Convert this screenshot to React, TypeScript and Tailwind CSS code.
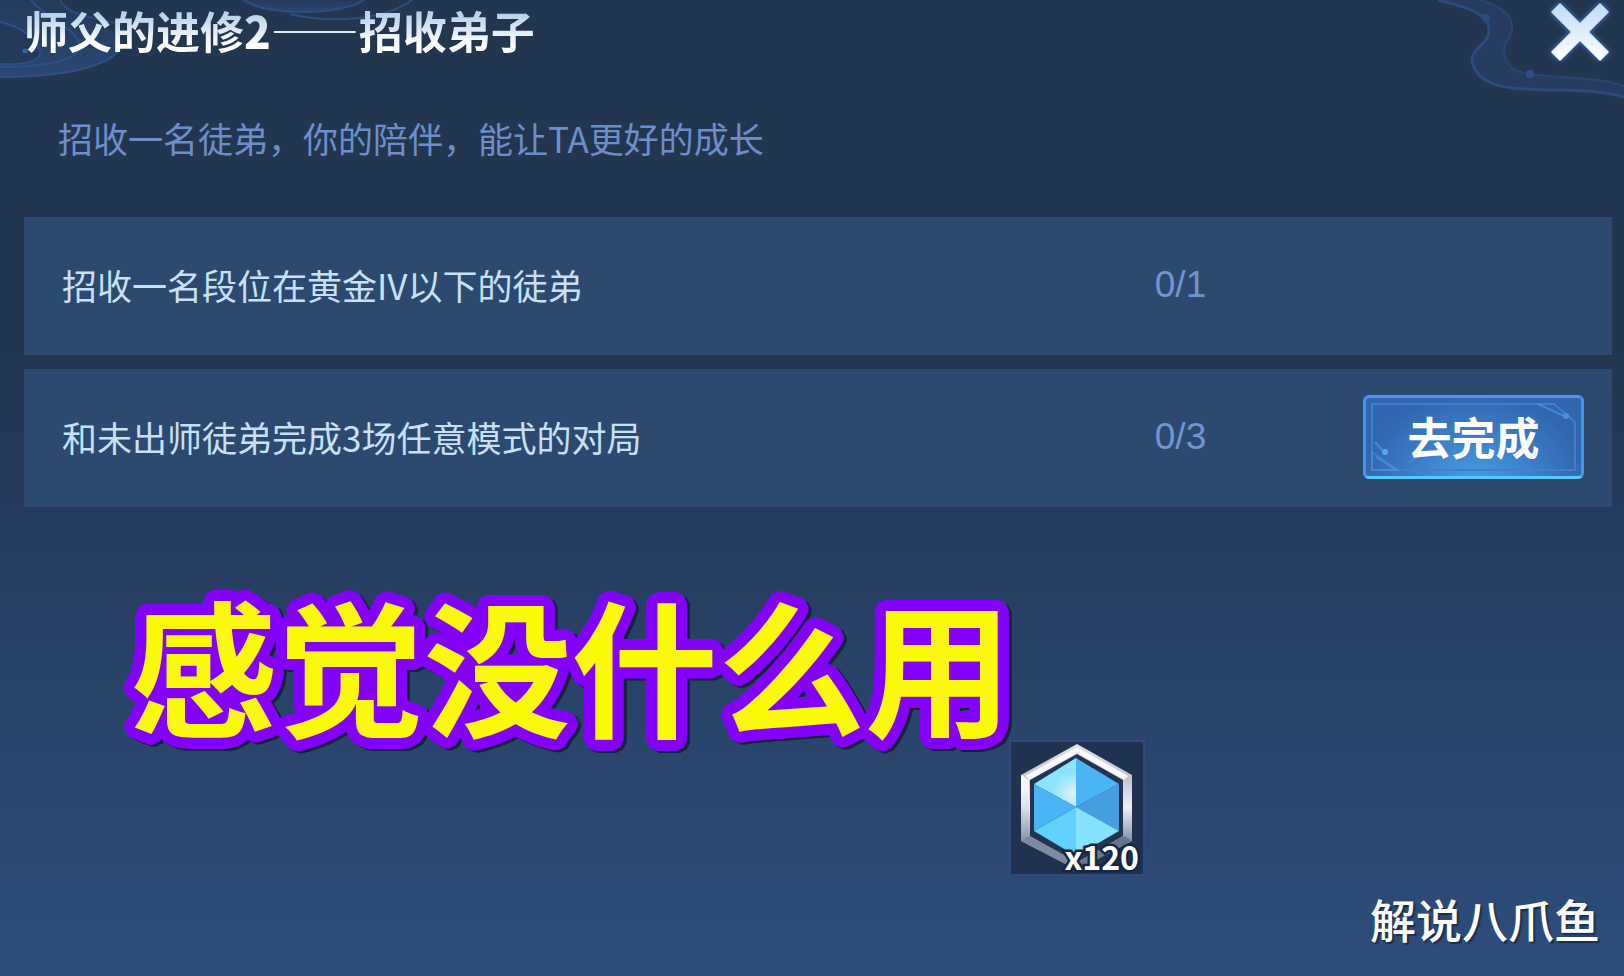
export default function App() {
  const tasks = [
    { label: "招收一名段位在黄金IV以下的徒弟", progress: "0/1", action: null },
    { label: "和未出师徒弟完成3场任意模式的对局", progress: "0/3", action: "去完成" },
  ];
  return (
    <main
      lang="zh-CN"
      className="relative flex min-h-screen flex-col overflow-hidden bg-[linear-gradient(180deg,#233650_0%,#233650_36%,#243a5c_52%,#29446b_74%,#2e4d7b_100%)] font-['Noto_Sans_CJK_SC',sans-serif]"
    >
      <CloudLeft />
      <CloudRight />

      <header className="relative flex h-[62px] items-start justify-between pr-3 pl-6">
        <h1 className="bg-linear-to-b from-[#b9d3ea] from-25% to-white to-75% bg-clip-text text-[44px] leading-[60px] font-bold whitespace-nowrap text-transparent">
          师父的进修<span className="font-black">2</span>
          <span lang="zh-TW" className="font-['Noto_Sans_CJK_TC',sans-serif] font-medium">——</span>招收弟子
        </h1>
        <button type="button" aria-label="关闭" className="cursor-pointer">
          <CloseIcon />
        </button>
      </header>

      <p className="relative mt-[50px] pl-[58px] text-[35px] leading-[52px] text-[#6c8fca]">
        招收一名徒弟，你的陪伴，能让TA更好的成长
      </p>

      <ul className="relative mt-[53px] flex flex-col gap-[14px] pr-3 pl-6">
        {tasks.map((t) => (
          <li
            key={t.label}
            className="flex h-[138px] items-center bg-[#2c4a6f] pr-7 pb-[3px] pl-[38px] text-[35px] leading-[52px]"
          >
            <span className="w-[71.8%] text-[#c6e0f5]">{t.label}</span>
            <span className="font-['Liberation_Sans',sans-serif] text-[37px] text-[#7095cf]">{t.progress}</span>
            {t.action && <TaskButton label={t.action} />}
          </li>
        ))}
      </ul>

      <p className="relative mt-[55px] pl-[130px] text-[147px] leading-[200px] font-bold whitespace-nowrap text-[#fafa05] [filter:drop-shadow(3px_2px_0px_#142338)] [text-shadow:11px_0_#8400ff,11px_2px_#8400ff,10px_4px_#8400ff,9px_6px_#8400ff,8px_8px_#8400ff,6px_9px_#8400ff,4px_10px_#8400ff,2px_11px_#8400ff,0_11px_#8400ff,-2px_11px_#8400ff,-4px_10px_#8400ff,-6px_9px_#8400ff,-8px_8px_#8400ff,-9px_6px_#8400ff,-10px_4px_#8400ff,-11px_2px_#8400ff,-11px_0_#8400ff,-11px_-2px_#8400ff,-10px_-4px_#8400ff,-9px_-6px_#8400ff,-8px_-8px_#8400ff,-6px_-9px_#8400ff,-4px_-10px_#8400ff,-2px_-11px_#8400ff,0_-11px_#8400ff,2px_-11px_#8400ff,4px_-10px_#8400ff,6px_-9px_#8400ff,8px_-8px_#8400ff,9px_-6px_#8400ff,10px_-4px_#8400ff,11px_-2px_#8400ff]">
        感觉没什么用
      </p>

      <div className="relative -mt-[22px] ml-[1009px] w-fit">
        <Reward amount="x120" />
      </div>

      <footer className="relative mt-2 flex justify-end pr-6 text-[46px] leading-[68px] font-medium text-white [text-shadow:2px_2px_1px_#1c2f4c]">
        解说八爪鱼
      </footer>
    </main>
  );
}

function TaskButton({ label }: { label: string }) {
  return (
    <button
      type="button"
      className="relative ml-auto h-[84px] w-[221px] cursor-pointer rounded-md border-[3px] border-x-[#4397e6] border-t-[#5a8ff0] border-b-[#55c8ff] bg-[radial-gradient(ellipse_at_50%_110%,#469fe4_0%,#3d83cb_35%,#3266ae_75%)] pb-0.5 text-[44px] leading-[60px] font-bold text-white"
    >
      <svg viewBox="0 0 215 78" className="absolute inset-0 size-full" fill="none" aria-hidden="true">
        <path d="M6 6H188L209 24V72H32L6 54Z" stroke="#3f7fd2" strokeWidth="2" />
        <path d="M6 54V72H32M9 44L18 54M172 6L200 19M10 59L32 73" stroke="#4f9ee8" strokeWidth="2" opacity=".6" />
        <circle cx="19" cy="54" r="3" fill="#55a7ef" />
        <circle cx="200" cy="18" r="3" fill="#4a92e2" />
      </svg>
      <span className="relative">{label}</span>
    </button>
  );
}

function Reward({ amount }: { amount: string }) {
  return (
    <div className="relative size-[136px] border-2 border-[#2c4c7c] bg-[#1f3351]">
      <svg viewBox="0 0 132 132" className="size-full" aria-hidden="true">
        <defs>
          <linearGradient id="rim" x1="0" y1="0" x2="0" y2="1">
            <stop offset="0" stopColor="#dfe2ea" />
            <stop offset=".28" stopColor="#c3c5d2" />
            <stop offset=".5" stopColor="#eef1f8" />
            <stop offset=".75" stopColor="#8b98ae" />
            <stop offset="1" stopColor="#5f7189" />
          </linearGradient>
          <linearGradient id="side" x1="0" y1="0" x2="0" y2="1">
            <stop offset="0" stopColor="#ffffff" />
            <stop offset=".45" stopColor="#e4e4ee" />
            <stop offset="1" stopColor="#8694a8" />
          </linearGradient>
          <radialGradient id="shine" gradientUnits="userSpaceOnUse" cx="63" cy="52" r="22">
            <stop offset="0" stopColor="#e4f0fa" />
            <stop offset="1" stopColor="#8be3ff" />
          </radialGradient>
        </defs>
        <path d="M66 2L121 33V99L66 128L10 99V33Z" fill="url(#rim)" />
        <path d="M66 5L117 34L113 38L66 11L19 38L14 34Z" fill="#f8f8fd" />
        <path d="M10 33L18 38V94L10 99Z" fill="url(#side)" />
        <path d="M10 99L18 94L66 120V128Z" fill="#7c8ba1" />
        <path d="M66 128V120L113 94L121 99Z" fill="#64768d" />
        <path d="M66 12L112 38V94L66 120L19 94V38Z" fill="#233452" />
        <path d="M65 65V16L23 42Z" fill="url(#shine)" />
        <path d="M65 65V16L108 42Z" fill="#49b5f6" />
        <path d="M65 65L108 42V89Z" fill="#459fe0" />
        <path d="M65 65L108 89L65 114Z" fill="#86e3ff" />
        <path d="M65 65V114L23 89Z" fill="#60d0fc" />
        <path d="M65 65L23 89V42Z" fill="#49b5f6" />
      </svg>
      <span className="absolute right-1 bottom-0 text-[32px] leading-[36px] font-bold text-white [-webkit-text-stroke:5px_#16263e] [paint-order:stroke_fill]">
        {amount}
      </span>
    </div>
  );
}

function CloseIcon() {
  return (
    <svg viewBox="0 0 64 66" className="h-[66px] w-16" aria-hidden="true">
      <defs>
        <linearGradient id="cross" x1="0" y1="0" x2="0" y2="1">
          <stop offset="0" stopColor="#bcdcf3" />
          <stop offset="1" stopColor="#ffffff" />
        </linearGradient>
        <filter id="glow" x="-20%" y="-20%" width="140%" height="140%">
          <feDropShadow dx="0" dy="0" stdDeviation="2.5" floodColor="#3f8cf0" />
        </filter>
      </defs>
      <path
        d="M12 3L32 23L52 3L61 12L41 32L61 52L52 61L32 41L12 61L3 52L23 32L3 12Z"
        fill="url(#cross)"
        filter="url(#glow)"
      />
    </svg>
  );
}

function CloudLeft() {
  return (
    <svg viewBox="0 0 420 90" className="absolute top-0 left-0 h-[90px] w-[420px]" fill="none" aria-hidden="true">
      <defs>
        <linearGradient id="mist" x1="0" y1="0" x2="0" y2="1">
          <stop offset="0" stopColor="#243b5c" />
          <stop offset="1" stopColor="#2b4c7c" />
        </linearGradient>
      </defs>
      <path d="M0 0H60C66 18 124 24 122 46C112 66 60 77 0 77Z" fill="url(#mist)" opacity=".8" />
      <path d="M0 77C60 77 108 68 121 48" stroke="#2d5185" strokeWidth="2" />
      <path d="M0 67C36 67 80 62 80 46C78 28 44 18 31 0" stroke="#2c5085" strokeWidth="2" />
      <path d="M0 22C22 26 40 42 40 54C36 64 18 65 0 64Z" fill="#22395a" />
      <path d="M0 22C22 26 40 42 40 54C36 64 18 65 0 64" stroke="#2c5085" strokeWidth="2" />
      <path d="M60 0C66 14 90 18 122 24" stroke="#2a4a7a" strokeWidth="2" />
      <circle cx="25" cy="51" r="2.5" fill="#3565a8" />
      <path d="M240 0C262 17 340 17 366 0Z" fill="url(#mist)" opacity=".8" />
      <path d="M244 0C266 16 340 16 364 0M290 14C330 24 385 20 412 0" stroke="#2b4e80" strokeWidth="2" />
    </svg>
  );
}

function CloudRight() {
  return (
    <svg viewBox="0 0 224 120" className="absolute top-0 right-0 h-[120px] w-[224px]" fill="none" aria-hidden="true">
      <path
        d="M38 0C64 6 86 16 88 24C94 44 72 46 72 60C76 88 112 89 145 90C180 90 205 91 224 97V86C200 77 165 79 130 74C118 73 106 68 104 52C104 42 110 40 112 30C113 18 104 6 80 0Z"
        fill="#26416a"
        opacity=".6"
      />
      <path d="M38 0C64 6 86 14 88 24C94 44 72 46 72 60C76 88 112 89 145 90C180 90 205 91 224 97" stroke="#2a4b7c" strokeWidth="3" />
      <path d="M80 0C104 6 113 18 112 30C110 40 104 42 104 52C106 68 118 73 130 74C165 79 200 77 224 86" stroke="#284671" strokeWidth="2" />
      <circle cx="86" cy="18" r="4" fill="#2a4b7c" />
      <circle cx="130" cy="74" r="4" fill="#2c5088" />
    </svg>
  );
}
